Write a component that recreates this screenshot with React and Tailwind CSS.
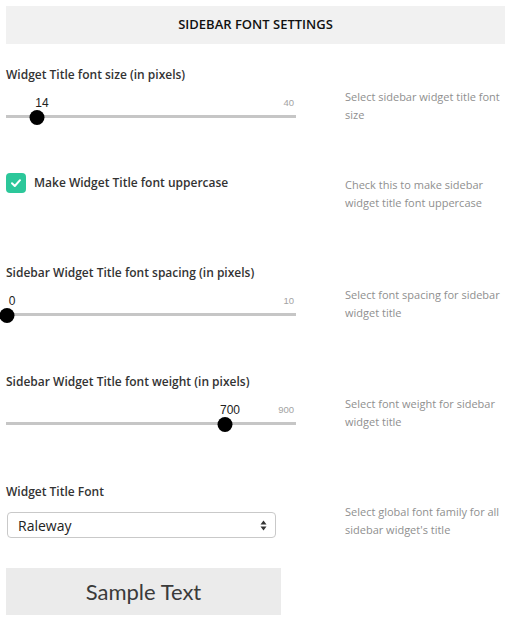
import React from 'react';

const SANS = "font-['Open_Sans',sans-serif]";

// slider: track + thumb + current value above it
function RangeRow({ value, max, thumb }) {
  return (
    <div className="relative w-[290px] h-[42px] shrink-0">
      <span
        className="absolute top-[13px] -translate-x-1/2 text-[12px] leading-[14px] text-[#222] font-['Liberation_Sans',sans-serif]"
        style={{ left: thumb + 5 }}
      >
        {value}
      </span>
      <span className="absolute right-[2px] top-[14px] text-[9.5px] leading-[12px] text-[#a3a3a3] font-['Liberation_Sans',sans-serif]">
        {max}
      </span>
      <div className="absolute left-0 right-0 top-[32px] h-[3px] bg-[#c6c6c6]" />
      <div
        className="absolute top-[27px] w-[15px] h-[15px] -translate-x-1/2 rounded-full bg-black"
        style={{ left: thumb }}
      />
    </div>
  );
}

function Desc({ children, className = '' }) {
  return (
    <p className={`w-[162px] shrink-0 text-[11px] leading-[18px] text-[#8f8f8f] ${className}`}>{children}</p>
  );
}

function SliderSection({ label, value, max, thumb, desc, className }) {
  return (
    <div className={className}>
      <div className="text-[12px] leading-[16px] font-semibold text-[#333]">{label}</div>
      <div className="flex gap-[49px]">
        <RangeRow value={value} max={max} thumb={thumb} />
        <Desc className="mt-[5px]">{desc}</Desc>
      </div>
    </div>
  );
}

export default function App() {
  return (
    <div className={`w-[510px] h-[621px] bg-white pl-[6px] pt-[6px] overflow-hidden ${SANS}`}>
      {/* Header */}
      <div className="h-[38px] w-[499px] bg-[#f1f1f1] flex items-center justify-center">
        <h2 className="text-[13px] font-semibold text-[#111]">SIDEBAR FONT SETTINGS</h2>
      </div>

      <SliderSection
        className="mt-[23px]"
        label="Widget Title font size (in pixels)"
        value="14"
        max="40"
        thumb={31}
        desc="Select sidebar widget title font size"
      />

      {/* Uppercase checkbox */}
      <div className="mt-[48px] flex gap-[49px]">
        <div className="w-[290px] shrink-0 flex items-start gap-[8px]">
          <span className="w-[20px] h-[20px] rounded-[4px] bg-[#2cc79a] flex items-center justify-center shrink-0">
            <svg width="12" height="12" viewBox="0 0 12 12" fill="none">
              <path d="M2 6.3 L4.8 9 L10 3.2" stroke="white" strokeWidth="2" strokeLinecap="round" strokeLinejoin="round" />
            </svg>
          </span>
          <span className="text-[12px] leading-[20px] font-semibold text-[#333]">Make Widget Title font uppercase</span>
        </div>
        <Desc className="mt-[3px]">Check this to make sidebar widget title font uppercase</Desc>
      </div>

      <SliderSection
        className="mt-[53px]"
        label="Sidebar Widget Title font spacing (in pixels)"
        value="0"
        max="10"
        thumb={1}
        desc="Select font spacing for sidebar widget title"
      />

      <SliderSection
        className="mt-[51px]"
        label="Sidebar Widget Title font weight (in pixels)"
        value="700"
        max="900"
        thumb={219}
        desc="Select font weight for sidebar widget title"
      />

      {/* Font family */}
      <div className="mt-[52px]">
        <div className="text-[12px] leading-[16px] font-semibold text-[#333]">Widget Title Font</div>
        <div className="flex gap-[49px]">
          <div className="w-[290px] shrink-0">
            <div className="mt-[12px] ml-px w-[269px] h-[26px] border border-[#c9c9c9] rounded-[4px] flex items-center justify-between pl-[10px] pr-[8px] bg-white">
              <span className="text-[14px] text-[#222]">Raleway</span>
              <svg width="7" height="11" viewBox="0 0 7 11">
                <path d="M3.5 0.5 L6.5 4.5 L0.5 4.5 Z" fill="#333" />
                <path d="M3.5 10.5 L6.5 6.5 L0.5 6.5 Z" fill="#333" />
              </svg>
            </div>
            <div className="mt-[30px] w-[275px] h-[47px] bg-[#ebebeb] flex items-center justify-center">
              <span className="text-[22px] text-[#3a3a3a] font-['Lato',sans-serif]">Sample Text</span>
            </div>
          </div>
          <Desc className="mt-[3px]">Select global font family for all sidebar widget's title</Desc>
        </div>
      </div>
    </div>
  );
}
